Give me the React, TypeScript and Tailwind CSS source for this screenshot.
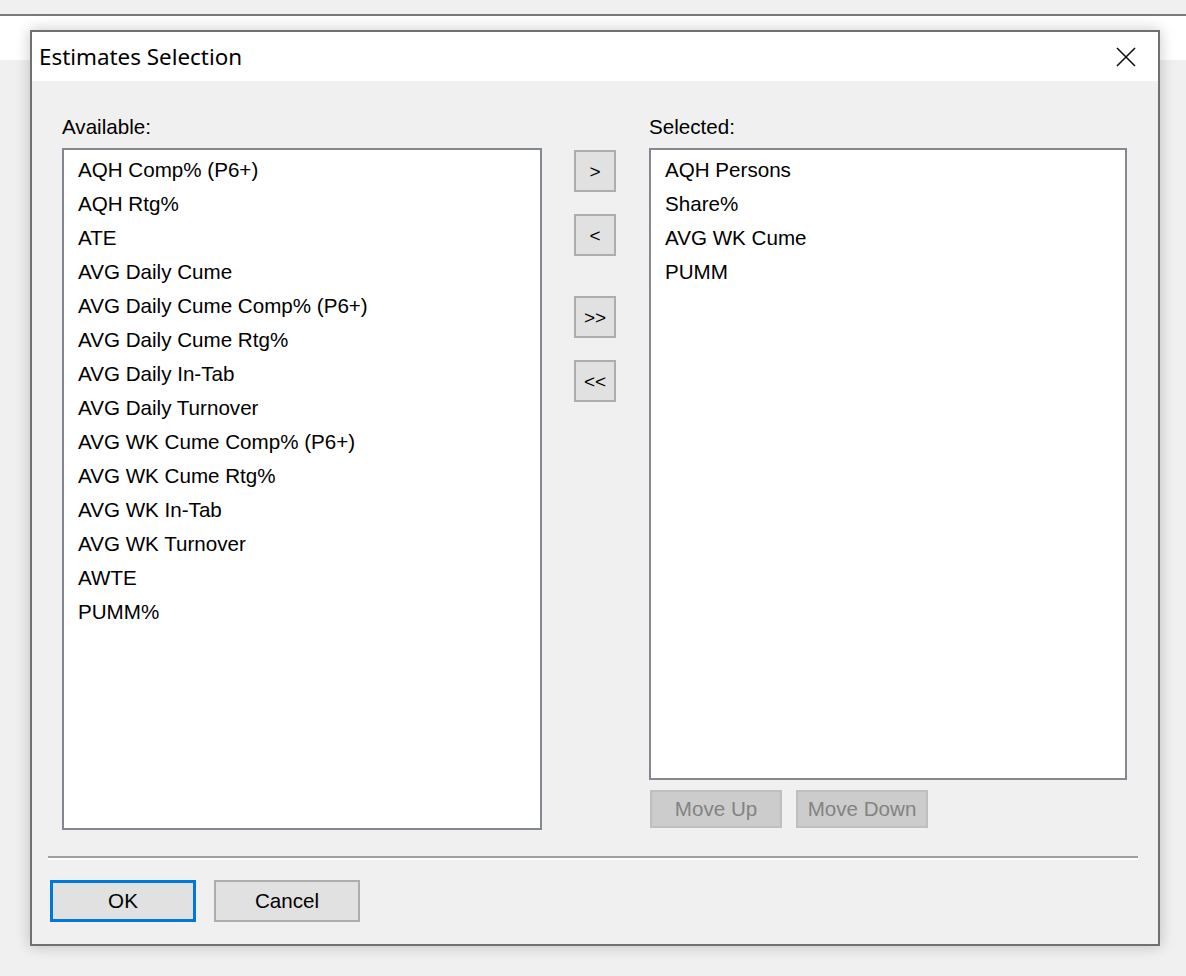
import { useState } from "react";

const available = [
  "AQH Comp% (P6+)",
  "AQH Rtg%",
  "ATE",
  "AVG Daily Cume",
  "AVG Daily Cume Comp% (P6+)",
  "AVG Daily Cume Rtg%",
  "AVG Daily In-Tab",
  "AVG Daily Turnover",
  "AVG WK Cume Comp% (P6+)",
  "AVG WK Cume Rtg%",
  "AVG WK In-Tab",
  "AVG WK Turnover",
  "AWTE",
  "PUMM%",
];

const selected = ["AQH Persons", "Share%", "AVG WK Cume", "PUMM"];

const sysFont = "font-['Liberation_Sans',Arial,sans-serif]";

function ListBox({ items, height }: { items: string[]; height: string }) {
  return (
    <div className={`bg-white border-2 border-[#828790] pt-[3px] ${height}`}>
      {items.map((item) => (
        <div key={item} className="h-[34px] leading-[34px] pl-[14px] text-[20.6px] text-black whitespace-nowrap">
          {item}
        </div>
      ))}
    </div>
  );
}

function ArrowButton({ label, className = "" }: { label: string; className?: string }) {
  return (
    <button className={`w-[42px] h-[42px] bg-[#e1e1e1] border-2 border-[#adadad] text-[19px] font-light text-black leading-none flex items-center justify-center ${className}`}>
      {label}
    </button>
  );
}

export default function App() {
  const [focused] = useState("ok");

  return (
    <div className={`relative min-h-screen w-full bg-[#f0f0f0] ${sysFont}`}>
      <div className="h-[14px]" />
      <div className="h-[2px] bg-[#7a7a7a]" />
      <div className="h-[44px] bg-white" />

      <div className="absolute left-[30px] top-[30px] w-[1130px] h-[916px] border-2 border-[#707070] bg-[#f0f0f0] shadow-[0_0_14px_rgba(0,0,0,0.22)] flex flex-col">
        {/* title bar */}
        <div className="h-[49px] bg-white flex items-center justify-between pl-[7px] pr-[22px]">
          <span className="font-['Noto_Sans',sans-serif] text-[22.4px] text-black">Estimates Selection</span>
          <svg width="20" height="20" viewBox="0 0 20 20">
            <path d="M1 1 L19 19 M19 1 L1 19" stroke="#111" strokeWidth="1.6" fill="none" />
          </svg>
        </div>

        {/* body */}
        <div className="flex pl-[30px] pt-[35px]">
          <div className="w-[480px]">
            <div className="h-[22px] leading-[22px] text-[20.6px] text-black mb-[10px]">Available:</div>
            <ListBox items={available} height="h-[682px]" />
          </div>

          <div className="flex flex-col ml-[32px] pt-[34px]">
            <ArrowButton label=">" />
            <ArrowButton label="<" className="mt-[22px]" />
            <ArrowButton label=">>" className="mt-[40px]" />
            <ArrowButton label="<<" className="mt-[22px]" />
          </div>

          <div className="w-[478px] ml-[33px]">
            <div className="h-[22px] leading-[22px] text-[20.6px] text-black mb-[10px]">Selected:</div>
            <ListBox items={selected} height="h-[632px]" />
            <div className="flex gap-[14px] mt-[10px] ml-[1px]">
              <button className="w-[132px] h-[38px] bg-[#cccccc] border-2 border-[#bfbfbf] text-[20.6px] text-[#838383]">
                Move Up
              </button>
              <button className="w-[132px] h-[38px] bg-[#cccccc] border-2 border-[#bfbfbf] text-[20.6px] text-[#838383]">
                Move Down
              </button>
            </div>
          </div>
        </div>

        {/* separator */}
        <div className="ml-[16px] mr-[20px] mt-[26px] border-t-2 border-[#a0a0a0] border-b-2 border-b-white" />

        {/* footer */}
        <div className="flex gap-[18px] ml-[18px] mt-[20px]">
          <button
            className={`w-[146px] h-[42px] bg-[#e1e1e1] text-[20.6px] text-black ${
              focused === "ok" ? "border-[3px] border-[#0078d7]" : "border-2 border-[#adadad]"
            }`}
          >
            OK
          </button>
          <button className="w-[146px] h-[42px] bg-[#e1e1e1] border-2 border-[#adadad] text-[20.6px] text-black">
            Cancel
          </button>
        </div>
      </div>
    </div>
  );
}
